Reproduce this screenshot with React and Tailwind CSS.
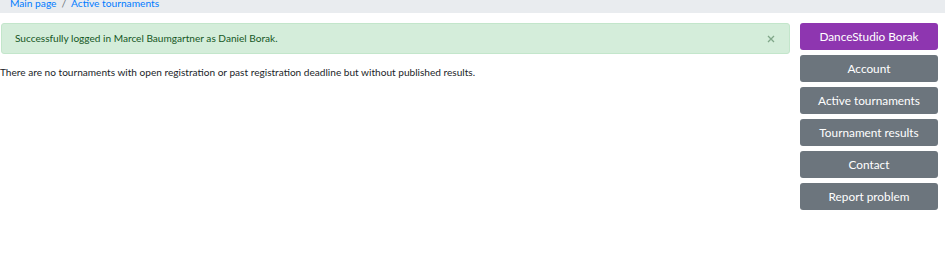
export default function App() {
  const btns = ["Account", "Active tournaments", "Tournament results", "Contact", "Report problem"];
  return (
    <div className="w-[945px] h-[269px] bg-white overflow-hidden" style={{ fontFamily: 'Lato, "Noto Sans", sans-serif' }}>
      <div className="h-[13px] bg-[#e9ecef] overflow-hidden">
        <div className="mt-[-6px] pl-[10px] text-[10.2px] leading-[18px] text-[#007bff] flex gap-[5px]">
          <span>Main page</span>
          <span className="text-[#6c757d]">/</span>
          <span>Active tournaments</span>
        </div>
      </div>
      <div className="flex gap-[10px] pt-[10px] pr-[7px]">
        <div className="flex-1 min-w-0">
          <div className="ml-[1px] h-[31px] rounded-[3px] border border-[#c3e6cb] bg-[#d4edda] text-[#155724] flex items-center justify-between pl-[13px] pr-[14px] text-[10.1px]">
            <span>Successfully logged in Marcel Baumgartner as Daniel Borak.</span>
            <svg width="8" height="8" viewBox="0 0 8 8" className="opacity-60">
              <path d="M1 1L7 7M7 1L1 7" stroke="#4a7a55" strokeWidth="1.3" />
            </svg>
          </div>
          <p className="mt-[10px] text-[10.1px] leading-[16px] text-[#212529]">
            There are no tournaments with open registration or past registration deadline but without published results.
          </p>
        </div>
        <div className="w-[138px] flex flex-col gap-[5px]">
          <div className="h-[27px] rounded-[3px] bg-[#8e36b0] text-white text-[11.8px] flex items-center justify-center">DanceStudio Borak</div>
          {btns.map((b) => (
            <div key={b} className="h-[27px] rounded-[3px] bg-[#6c757d] text-white text-[11.8px] flex items-center justify-center">{b}</div>
          ))}
        </div>
      </div>
    </div>
  );
}
